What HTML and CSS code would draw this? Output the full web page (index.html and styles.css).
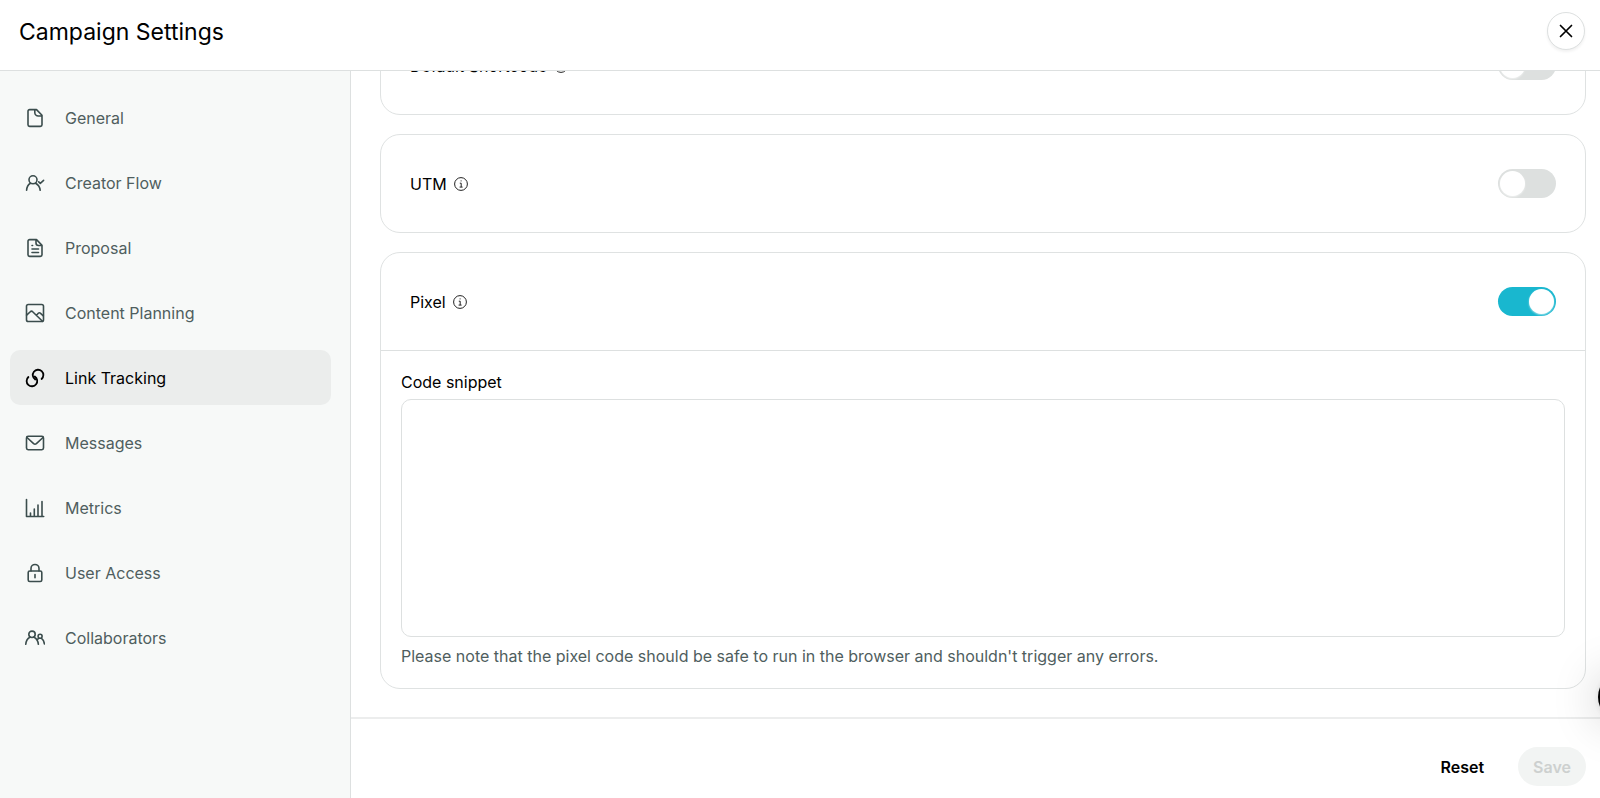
FILE: index.html
```html
<!DOCTYPE html>
<html lang="en">
<head>
<meta charset="utf-8">
<meta name="viewport" content="width=device-width, initial-scale=1">
<title>Campaign Settings</title>
<link rel="stylesheet" href="styles.css">
</head>
<body>
<div class="app">
  <header class="topbar">
    <h1 class="title">Campaign Settings</h1>
    <button class="close" type="button" aria-label="Close">
      <svg class="close-icon" viewBox="0 0 14 14"><path d="M1.500 1.500l11 11M12.500 1.500L1.500 12.500"/></svg>
    </button>
  </header>
  <div class="layout">
    <nav class="sidebar" aria-label="Settings">
      <a class="item" href="#general">
        <svg class="icon" viewBox="0 0 20 20"><path d="M11.500 1.600H4.600A1.600 1.600 0 0 0 3 3.200V16.800A1.600 1.600 0 0 0 4.600 18.400H15.400A1.600 1.600 0 0 0 17 16.800V7.200zM11.300 1.600H9.800V4.500A3.500 3.500 0 0 0 13.300 8H17"/></svg>
        General</a>
      <a class="item" href="#creator-flow">
        <svg class="icon" viewBox="0 0 20 20"><circle cx="8" cy="6.800" r="4"/><path d="M1.600 17.300C1.800 14 3.300 11.600 5.500 10.300M10.500 10.300C13 11.600 14.800 14 15.200 17.300M13.700 8.800l1.600 1.500 3.300-3"/></svg>
        Creator Flow</a>
      <a class="item" href="#proposal">
        <svg class="icon" viewBox="0 0 20 20"><path d="M11.500 1.600H4.600A1.600 1.600 0 0 0 3 3.200V16.800A1.600 1.600 0 0 0 4.600 18.400H15.400A1.600 1.600 0 0 0 17 16.800V7.200zM11 1.600V5A2.500 2.500 0 0 0 13.500 7.500H17M7 7.500H7.600M7 11H13.500M7 14.500H13.500"/></svg>
        Proposal</a>
      <a class="item" href="#content-planning">
        <svg class="icon" viewBox="0 0 20 20"><rect x="1.500" y="1.500" width="17" height="17" rx="1.800"/><path d="M1.600 12.200L5.600 8.500Q6.500 7.800 7.400 8.500L17.500 18.300M11.500 12.300L13.300 10.300Q14.300 9.300 15.300 10.200L18.300 12.800"/></svg>
        Content Planning</a>
      <a class="item item-active" href="#link-tracking" aria-current="page">
        <svg class="icon icon-strong" viewBox="0 0 20 20"><path d="M10.200 11.500A5.300 5.300 0 1 1 16.600 11M9.800 8.500A5.300 5.300 0 1 1 3.400 9"/></svg>
        Link Tracking</a>
      <a class="item" href="#messages">
        <svg class="icon" viewBox="0 0 20 20"><rect x="1.500" y="3.300" width="17" height="13.400" rx="1.600"/><path d="M2 4.500L8.600 10.600Q10 11.800 11.400 10.600L18 4.500"/></svg>
        Messages</a>
      <a class="item" href="#metrics">
        <svg class="icon" viewBox="0 0 20 20"><path d="M1.500 1.500V18.500H18.700M5.500 18V15M9.300 18V11M13 18V7M17 18V3.500"/></svg>
        Metrics</a>
      <a class="item" href="#user-access">
        <svg class="icon" viewBox="0 0 20 20"><rect x="3.200" y="8" width="13.600" height="10.500" rx="1.600"/><path d="M6 8V5.500A4 4 0 0 1 14 5.500V8M10 11.500V14.800"/></svg>
        User Access</a>
      <a class="item" href="#collaborators">
        <svg class="icon" viewBox="0 0 20 20"><circle cx="7" cy="6.300" r="3.200"/><path d="M.8 16.300C1 13.200 2.500 10.500 4.900 9.200M9.100 9.200C11.600 10.500 13 13 13.400 16.300"/><circle cx="15.100" cy="8.300" r="2"/><path d="M12.200 11.500L13.800 10.400M16.500 10.400C18.200 11.600 19.100 13.600 19.400 16"/></svg>
        Collaborators</a>
    </nav>
    <main class="main">
      <div class="scroll">
        <div class="cards">
          <section class="card">
            <div class="card-head">
              <label class="card-label" for="shortcode">Default Shortcode</label>
              <svg class="info" viewBox="0 0 14 14"><circle cx="7" cy="7" r="6.400"/><path d="M5.800 6.200H7.200V10M5.600 10.100H8.600M6.600 3.900H7.600"/></svg>
              <input class="switch" id="shortcode" type="checkbox" role="switch">
            </div>
          </section>
          <section class="card">
            <div class="card-head">
              <label class="card-label" for="utm">UTM</label>
              <svg class="info" viewBox="0 0 14 14"><circle cx="7" cy="7" r="6.400"/><path d="M5.800 6.200H7.200V10M5.600 10.100H8.600M6.600 3.900H7.600"/></svg>
              <input class="switch" id="utm" type="checkbox" role="switch">
            </div>
          </section>
          <section class="card">
            <div class="card-head">
              <label class="card-label" for="pixel">Pixel</label>
              <svg class="info" viewBox="0 0 14 14"><circle cx="7" cy="7" r="6.400"/><path d="M5.800 6.200H7.200V10M5.600 10.100H8.600M6.600 3.900H7.600"/></svg>
              <input class="switch" id="pixel" type="checkbox" role="switch" checked>
            </div>
            <div class="card-body">
              <label class="field-label" for="snippet">Code snippet</label>
              <textarea class="snippet" id="snippet" aria-describedby="snippet-note"></textarea>
              <p class="note" id="snippet-note">Please note that the pixel code should be safe to run in the browser and shouldn't trigger any errors.</p>
            </div>
          </section>
        </div>
      </div>
      <footer class="footer">
        <button class="btn" type="button">Reset</button>
        <button class="btn btn-save" type="button" disabled>Save</button>
      </footer>
    </main>
  </div>
  <button class="launcher" type="button" aria-label="Open chat"></button>
</div>
</body>
</html>
```
FILE: styles.css
```css
* {
  box-sizing: border-box;
}

body {
  margin: 0;
  font-family: Inter, "Liberation Sans", sans-serif;
  font-size: 16px;
  line-height: 24px;
  color: #000;
  background: #fff;
}

button,
textarea {
  font: inherit;
  color: inherit;
}

.app {
  display: flex;
  flex-direction: column;
  height: 100vh;
  overflow: hidden;
}

.topbar {
  display: flex;
  flex: none;
  align-items: flex-start;
  justify-content: space-between;
  padding: 12px 15px 18px 19px;
  border-bottom: 1px solid #dde0e0;
}

.title {
  margin: 0;
  font-size: 23px;
  font-weight: 400;
  line-height: 40px;
}

.close {
  display: grid;
  place-items: center;
  width: 38px;
  height: 38px;
  padding: 0;
  border: 1px solid #dde0e0;
  border-radius: 50%;
  background: #fff;
  box-shadow: 0 2px 3px rgba(0, 0, 0, 0.06);
}

.close-icon {
  width: 14px;
  height: 14px;
  fill: none;
  stroke: #000;
  stroke-width: 1.7;
  stroke-linecap: round;
}

.layout {
  display: flex;
  flex: 1;
  min-height: 0;
}

.sidebar {
  display: flex;
  flex: none;
  flex-direction: column;
  gap: 10px;
  width: 351px;
  padding: 19px 19px 19px 10px;
  border-right: 1px solid #dde0e0;
  background: #f7f9f8;
}

.item {
  display: flex;
  align-items: center;
  gap: 20px;
  height: 55px;
  padding: 0 15px;
  border-radius: 10px;
  color: #4f5e5e;
  text-decoration: none;
}

.item-active {
  background: #ebedec;
  color: #000;
}

.icon {
  flex: none;
  width: 20px;
  height: 20px;
  fill: none;
  stroke: #3b4d4d;
  stroke-width: 1.6;
  stroke-linecap: round;
  stroke-linejoin: round;
}

.icon-strong {
  stroke: #000;
  stroke-width: 1.8;
}

.main {
  display: flex;
  flex: 1;
  flex-direction: column;
  min-width: 0;
}

/* Reversed column keeps the view anchored to the last card. */
.scroll {
  display: flex;
  flex: 1;
  flex-direction: column-reverse;
  min-height: 0;
  overflow-y: auto;
  scrollbar-width: none;
}

.cards {
  display: flex;
  flex: none;
  flex-direction: column;
  gap: 19px;
  padding: 28px 14px 28px 29px;
}

.card {
  border: 1px solid #dfe2e2;
  border-radius: 20px;
  background: #fff;
}

.card-head {
  display: flex;
  align-items: center;
  gap: 7px;
  height: 97px;
  padding: 0 29px;
}

.info {
  width: 14px;
  height: 14px;
  fill: none;
  stroke: #222;
  stroke-width: 1;
}

.switch {
  appearance: none;
  width: 58px;
  height: 29px;
  margin: 0 0 0 auto;
  padding: 2px;
  border-radius: 15px;
  background: #dde0df;
}

.switch::before {
  content: "";
  display: block;
  width: 25px;
  height: 25px;
  border-radius: 50%;
  background: #fff;
  box-shadow: 0 1px 2px rgba(255, 255, 255, 0.6);
}

.switch:checked {
  background: #19b7cf;
}

.switch:checked::before {
  margin-left: auto;
}

.card-body {
  padding: 19px 20px 20px;
  border-top: 1px solid #dde0e0;
}

.field-label {
  display: block;
  margin-bottom: 5px;
}

.snippet {
  display: block;
  width: 100%;
  height: 238px;
  padding: 10px;
  border: 1px solid #dde0e0;
  border-radius: 10px;
  background: #fff;
  resize: none;
}

.note {
  margin: 7px 0 0;
  color: #4f5e5e;
}

.footer {
  display: flex;
  flex: none;
  justify-content: flex-end;
  gap: 10px;
  padding: 28px 14px 12px;
  border-top: 2px solid #eceded;
}

.btn {
  height: 39px;
  padding: 0 24px;
  border: 0;
  border-radius: 20px;
  background: none;
  font-weight: 600;
}

.btn-save {
  padding: 0 15px;
  background: #f2f4f3;
  color: #cdd0cf;
}

.launcher {
  position: fixed;
  right: -46px;
  bottom: 77px;
  width: 48px;
  height: 48px;
  padding: 0;
  border: 0;
  border-radius: 50%;
  background: #000;
  box-shadow: 0 1px 6px rgba(0, 0, 0, 0.1), 0 2px 48px rgba(0, 0, 0, 0.22);
}
```
